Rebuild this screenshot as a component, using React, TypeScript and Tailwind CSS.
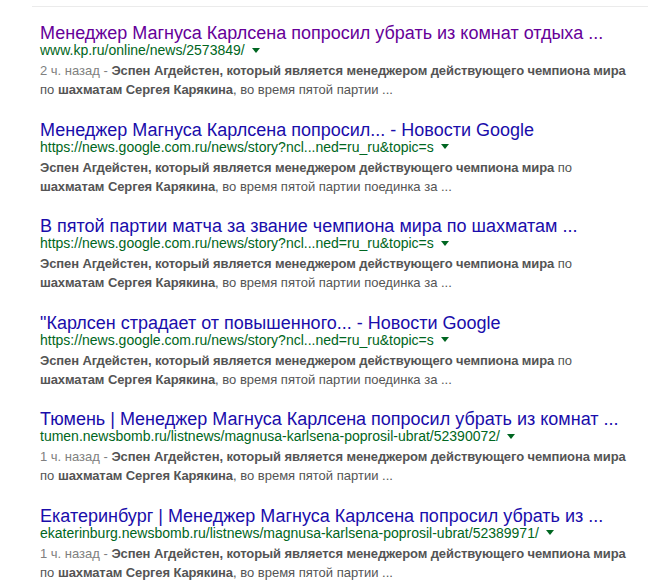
import React from "react";

type Result = {
  title: string;
  url: string;
  visited?: boolean;
  time?: string;
  line1: React.ReactNode;
  line2: React.ReactNode;
};

const B = ({ children }: { children: React.ReactNode }) => (
  <b className="font-bold tracking-[-0.1px]">{children}</b>
);

const snippetA = {
  line1: (
    <>
      <B>Эспен Агдейстен, который является менеджером действующего чемпиона мира</B>
    </>
  ),
  line2: (
    <>
      по <B>шахматам Сергея Карякина</B>, во время пятой партии ...
    </>
  ),
};

const snippetB = {
  line1: (
    <>
      <B>Эспен Агдейстен, который является менеджером действующего чемпиона мира</B> по
    </>
  ),
  line2: (
    <>
      <B>шахматам Сергея Карякина</B>, во время пятой партии поединка за ...
    </>
  ),
};

const results: Result[] = [
  {
    title: "Менеджер Магнуса Карлсена попросил убрать из комнат отдыха ...",
    url: "www.kp.ru/online/news/2573849/",
    visited: true,
    time: "2 ч. назад",
    ...snippetA,
  },
  {
    title: "Менеджер Магнуса Карлсена попросил... - Новости Google",
    url: "https://news.google.com.ru/news/story?ncl...ned=ru_ru&topic=s",
    ...snippetB,
  },
  {
    title: "В пятой партии матча за звание чемпиона мира по шахматам ...",
    url: "https://news.google.com.ru/news/story?ncl...ned=ru_ru&topic=s",
    ...snippetB,
  },
  {
    title: "\"Карлсен страдает от повышенного... - Новости Google",
    url: "https://news.google.com.ru/news/story?ncl...ned=ru_ru&topic=s",
    ...snippetB,
  },
  {
    title: "Тюмень | Менеджер Магнуса Карлсена попросил убрать из комнат ...",
    url: "tumen.newsbomb.ru/listnews/magnusa-karlsena-poprosil-ubrat/52390072/",
    time: "1 ч. назад",
    ...snippetA,
  },
  {
    title: "Екатеринбург | Менеджер Магнуса Карлсена попросил убрать из ...",
    url: "ekaterinburg.newsbomb.ru/listnews/magnusa-karlsena-poprosil-ubrat/52389971/",
    time: "1 ч. назад",
    ...snippetA,
  },
];

const Caret = () => (
  <span className="ml-[7px] inline-block h-0 w-0 border-x-[4px] border-t-[5px] border-x-transparent border-t-[#006621] align-middle" />
);

const SearchResult = ({ r }: { r: Result }) => (
  <div className="mb-[20.5px]">
    <div
      className={
        "whitespace-nowrap text-[18px] leading-[20px] " +
        (r.visited ? "text-[#660099]" : "text-[#1a0dab]")
      }
    >
      {r.title}
    </div>
    <div className="flex items-center whitespace-nowrap text-[14px] leading-[14px] text-[#006621]">
      {r.url}
      <Caret />
    </div>
    <div className="mt-[4px] whitespace-nowrap text-[13px] leading-[19px] text-[#545454]">
      <div>
        {r.time && <span className="text-[#808080]">{r.time} - </span>}
        {r.line1}
      </div>
      <div>{r.line2}</div>
    </div>
  </div>
);

export default function App() {
  return (
    <div
      className="h-[588px] w-[669px] overflow-hidden bg-white"
      style={{ fontFamily: '"Liberation Sans", Arial, sans-serif' }}
    >
      <div className="ml-[32px] mr-[21px] mt-[6px] h-px bg-[#ebebeb]" />
      <div className="pl-[40px] pt-[16px]">
        {results.map((r, i) => (
          <SearchResult key={i} r={r} />
        ))}
      </div>
    </div>
  );
}
